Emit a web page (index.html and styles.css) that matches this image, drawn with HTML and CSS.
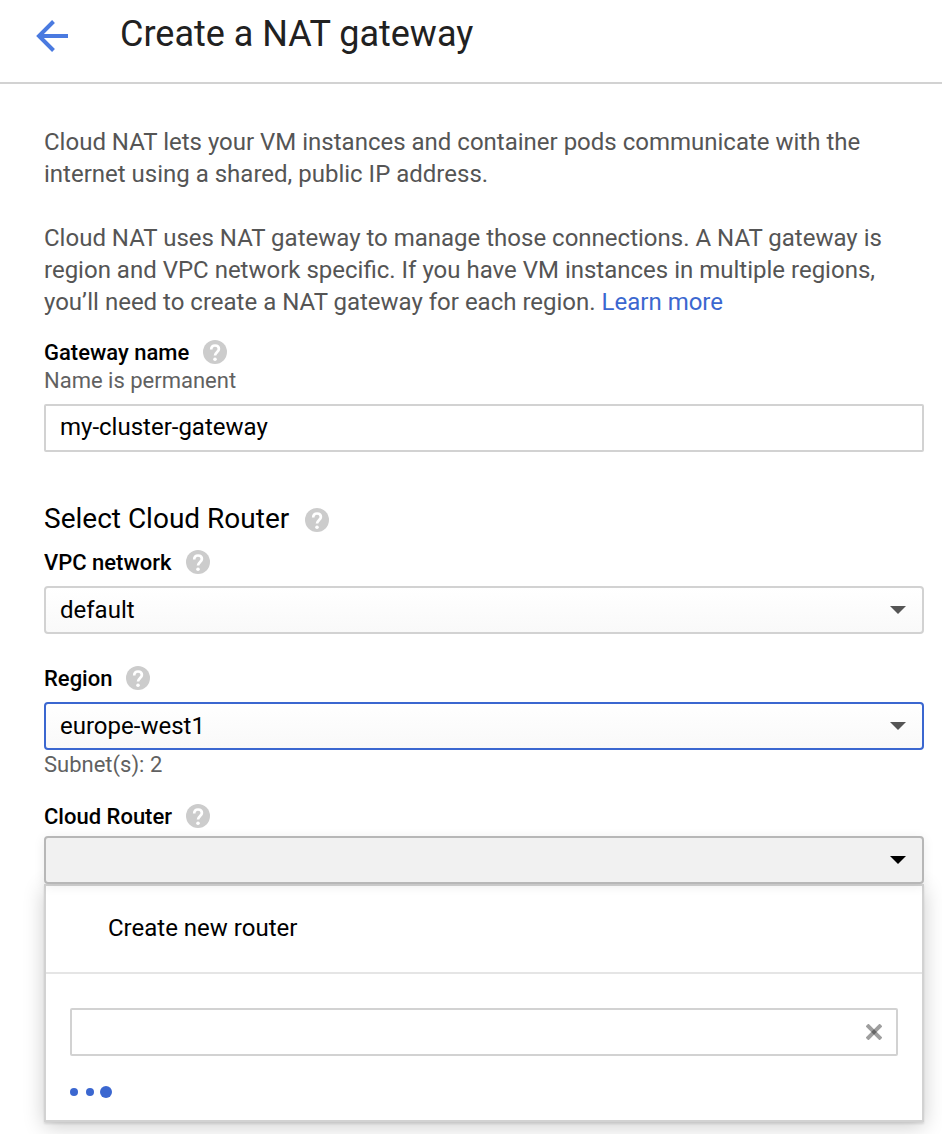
FILE: index.html
```html
<!DOCTYPE html>
<html lang="en">
<head>
<meta charset="utf-8">
<title>Create a NAT gateway</title>
<link rel="stylesheet" href="styles.css">
</head>
<body>
<svg class="sprite" aria-hidden="true">
  <symbol id="help" viewBox="0 0 24 24">
    <circle cx="12" cy="12" r="12" fill="#ccc"/>
    <path d="M8.200 9.400C8.200 6.900 9.700 5.500 12 5.500s3.900 1.400 3.900 3.500c0 2.800-3.900 3.100-3.900 6.600" fill="none" stroke="#fff" stroke-width="2.700"/>
    <circle cx="12" cy="19.200" r="1.800" fill="#fff"/>
  </symbol>
  <symbol id="caret" viewBox="0 0 16 8">
    <path d="M0 0h16L8 8z" fill="currentColor"/>
  </symbol>
</svg>
<header class="header">
  <button class="icon-button back" type="button" aria-label="Back">
    <svg class="back-icon" viewBox="0 0 32 32" fill="none" stroke="#4a7ae0" stroke-width="4"><path d="M32 16H3M17.500 1.500L3 16l14.500 14.500"/></svg>
  </button>
  <h1 class="title">Create a NAT gateway</h1>
</header>
<main class="content">
  <p class="intro">Cloud NAT lets your VM instances and container pods communicate with the internet using a shared, public IP address.</p>
  <p class="intro">Cloud NAT uses NAT gateway to manage those connections. A NAT gateway is region and VPC network specific. If you have VM instances in multiple regions, you’ll need to create a NAT gateway for each region. <a class="link" href="#">Learn more</a></p>
  <form class="form">
    <div class="field name-field">
      <div class="label-row">
        <label class="label" for="name">Gateway name</label>
        <button class="icon-button" type="button" aria-label="Help for gateway name"><svg class="help-icon"><use href="#help"/></svg></button>
      </div>
      <div class="hint">Name is permanent</div>
      <input class="control text-input" id="name" type="text" value="my-cluster-gateway">
    </div>
    <div class="section-row">
      <h2 class="section-title">Select Cloud Router</h2>
      <button class="icon-button" type="button" aria-label="Help for Cloud Router selection"><svg class="help-icon"><use href="#help"/></svg></button>
    </div>
    <div class="field network-field">
      <div class="label-row">
        <label class="label" for="network">VPC network</label>
        <button class="icon-button" type="button" aria-label="Help for VPC network"><svg class="help-icon"><use href="#help"/></svg></button>
      </div>
      <div class="select-wrap">
        <select class="control select" id="network"><option>default</option></select>
        <svg class="caret"><use href="#caret"/></svg>
      </div>
    </div>
    <div class="field region-field">
      <div class="label-row">
        <label class="label" for="region">Region</label>
        <button class="icon-button" type="button" aria-label="Help for region"><svg class="help-icon"><use href="#help"/></svg></button>
      </div>
      <div class="select-wrap">
        <select class="control select focused" id="region"><option>europe-west1</option></select>
        <svg class="caret"><use href="#caret"/></svg>
      </div>
      <div class="hint">Subnet(s): 2</div>
    </div>
    <div class="field">
      <div class="label-row router-label">
        <label class="label" for="router">Cloud Router</label>
        <button class="icon-button" type="button" aria-label="Help for Cloud Router"><svg class="help-icon"><use href="#help"/></svg></button>
      </div>
      <div class="select-wrap">
        <select class="control select open" id="router"><option></option></select>
        <svg class="caret caret-dark"><use href="#caret"/></svg>
      </div>
      <div class="menu">
        <button class="menu-item" type="button">Create new router</button>
        <div class="menu-body">
          <div class="filter">
            <input class="filter-input" type="text" aria-label="Filter routers">
            <button class="icon-button" type="button" aria-label="Clear filter">
              <svg class="clear-icon" viewBox="0 0 16 16"><path d="M1 1l14 14M15 1L1 15" stroke="#9e9e9e" stroke-width="4"/><path d="M8 5.200L10.800 8 8 10.800 5.200 8z" fill="#666"/></svg>
            </button>
          </div>
          <div class="loading" role="status" aria-label="Loading">
            <span class="dot"></span><span class="dot"></span><span class="dot dot-large"></span>
          </div>
        </div>
      </div>
    </div>
  </form>
</main>
</body>
</html>
```
FILE: styles.css
```css
* { box-sizing: border-box; }
body {
  margin: 0;
  background: #fff;
  color: #000;
  font-family: Roboto, "Liberation Sans", sans-serif;
  font-size: 24px;
  line-height: 32px;
}
.sprite { position: absolute; width: 0; height: 0; }
h1, h2, p { margin: 0; font-weight: 400; }
button, input, select { font: inherit; color: inherit; }
.icon-button {
  display: flex;
  padding: 0;
  border: 0;
  background: none;
}
.header {
  display: flex;
  align-items: center;
  gap: 52px;
  padding: 12px 36px 26px;
  border-bottom: 2px solid #d2d2d2;
}
.back { padding-top: 4px; }
.back-icon { width: 32px; height: 32px; }
.title {
  color: #212121;
  font-size: 36px;
  line-height: 44px;
}
.content { padding: 42px 18px 12px 44px; }
.intro {
  margin-bottom: 32px;
  color: #555;
}
.intro:last-of-type { margin-bottom: 20px; }
.link { color: #3b67d0; text-decoration: none; }
.label-row {
  display: flex;
  align-items: center;
  gap: 14px;
  height: 28px;
}
.label {
  padding-top: 2px;
  font-size: 22px;
  font-weight: 500;
  line-height: 28px;
}
.help-icon { width: 24px; height: 24px; }
.hint {
  color: #616161;
  font-size: 22px;
  line-height: 30px;
}
.name-field .hint { margin-bottom: 8px; }
.control {
  display: block;
  width: 100%;
  height: 48px;
  padding: 0 14px;
  border: 2px solid #d2d2d2;
  border-radius: 2px;
  background: #fff;
  outline: 0;
}
.text-input { padding-bottom: 2px; }
.section-row {
  display: flex;
  align-items: center;
  gap: 16px;
  margin-top: 48px;
}
.section-title { font-size: 28px; line-height: 38px; }
.section-row .icon-button { padding-top: 2px; }
.network-field { margin-top: 10px; }
.network-field .label-row, .region-field .label-row { margin-bottom: 10px; }
.region-field { margin: 30px 0 22px; }
.router-label { margin-bottom: 6px; }
.select-wrap { display: grid; align-items: center; }
.select-wrap > * { grid-area: 1 / 1; }
.select {
  appearance: none;
  border-radius: 4px;
  background: linear-gradient(#fff, #f9f9f9);
}
.focused { border-color: #3b67d0; }
.open {
  border-color: #b7b7b7;
  background: #f1f1f1;
  box-shadow: 0 2px 12px rgba(0, 0, 0, 0.08);
}
.caret {
  justify-self: end;
  width: 16px;
  height: 8px;
  margin-right: 18px;
  color: #555;
  pointer-events: none;
}
.caret-dark { color: #000; }
.menu {
  border: 2px solid #d2d2d2;
  background: #fff;
  box-shadow: 0 4px 20px rgba(0, 0, 0, 0.2), 0 2px 2px rgba(0, 0, 0, 0.1);
}
.menu-item {
  display: block;
  width: 100%;
  padding: 26px 62px 28px;
  border: 0;
  border-bottom: 2px solid #e5e5e5;
  background: none;
  text-align: left;
}
.menu-body { padding: 34px 24px 18px; }
.filter {
  display: flex;
  align-items: center;
  height: 48px;
  padding-right: 14px;
  border: 2px solid #d2d2d2;
  border-radius: 2px;
}
.filter-input {
  flex: 1;
  min-width: 0;
  padding: 0 14px;
  border: 0;
  outline: 0;
  background: none;
}
.clear-icon { width: 16px; height: 16px; }
.loading {
  display: flex;
  align-items: center;
  gap: 8px;
  height: 20px;
  margin-top: 26px;
}
.dot {
  width: 8px;
  height: 8px;
  border-radius: 50%;
  background: #3b67d0;
}
.dot-large { width: 12px; height: 12px; margin-left: -2px; }
```
